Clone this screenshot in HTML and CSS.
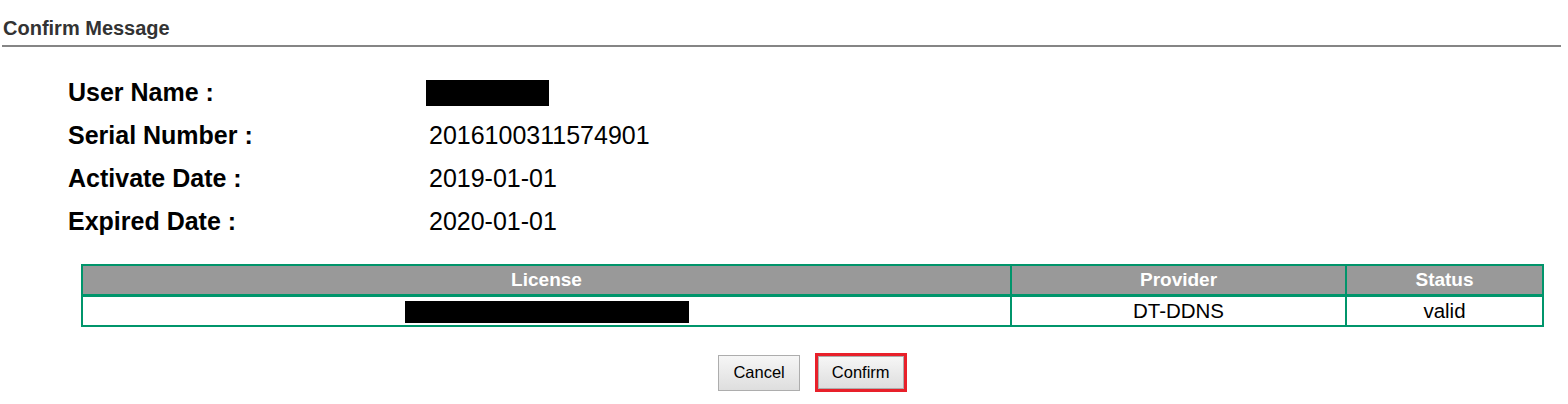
FILE: index.html
```html
<!DOCTYPE html>
<html>
<head>
<meta charset="utf-8">
<link rel="stylesheet" href="styles.css">
</head>
<body>
<div class="page">
  <div class="title">Confirm Message</div>
  <div class="rule"></div>
  <div class="info">
    <div class="row"><div class="label">User Name :</div><div class="value"><span class="mask-user"></span></div></div>
    <div class="row"><div class="label">Serial Number :</div><div class="value text">2016100311574901</div></div>
    <div class="row"><div class="label">Activate Date :</div><div class="value text">2019-01-01</div></div>
    <div class="row"><div class="label">Expired Date :</div><div class="value text">2020-01-01</div></div>
  </div>
  <div class="wrap">
    <table class="lic">
      <thead>
        <tr><th class="c1">License</th><th class="c2">Provider</th><th class="c3">Status</th></tr>
      </thead>
      <tbody>
        <tr><td><span class="mask-lic"></span></td><td>DT-DDNS</td><td>valid</td></tr>
      </tbody>
    </table>
    <div class="buttons">
      <button class="btn">Cancel</button>
      <div class="focus"><button class="btn">Confirm</button></div>
    </div>
  </div>
</div>
</body>
</html>
```
FILE: styles.css
```css
html, body { margin: 0; padding: 0; background: #fff; }
body { font-family: "Liberation Sans", Arial, sans-serif; color: #000; }
.page { width: 1568px; height: 404px; position: relative; }
.title { font-weight: bold; font-size: 20px; color: #333; padding: 17px 0 0 3px; line-height: 22px; box-sizing: border-box; height: 45px; }
.rule { margin: 0 7px 0 2px; height: 0; border-top: 2px solid #858585; }
.info { padding: 24px 0 0 68px; }
.row { display: flex; align-items: center; height: 43px; }
.label { width: 358px; font-weight: bold; font-size: 25px; }
.value { font-size: 25px; }
.value.text { padding-left: 3px; }
.mask-user { display: block; width: 123px; height: 26px; background: #000; }
.wrap { margin: 21px 0 0 81px; width: 1463px; }
.lic { width: 1463px; border-collapse: collapse; border: 2px solid #00956b; table-layout: fixed; }
.lic th { background: #999; color: #fff; font-weight: bold; font-size: 19px; height: 28px; padding: 0; border: 2px solid #00956b; border-bottom-width: 3px; }
.lic td { font-size: 20.5px; height: 28px; padding: 0; text-align: center; border: 2px solid #00956b; }
.c1 { width: 927px; }
.c2 { width: 333px; }
.mask-lic { display: inline-block; width: 284px; height: 22px; background: #000; vertical-align: middle; }
.buttons { display: flex; justify-content: center; align-items: center; gap: 15px; margin-top: 26px; }
.btn { font-family: "Liberation Sans", Arial, sans-serif; font-size: 16.5px; color: #000; background: linear-gradient(#f6f6f6, #dedede); border: 1px solid #adadad; border-radius: 0; height: 36px; padding: 0 14px; }
.focus { border: 3px solid #e8202a; padding: 0; display: flex; }
.focus .btn { height: 33px; padding: 0 13px; }
```
